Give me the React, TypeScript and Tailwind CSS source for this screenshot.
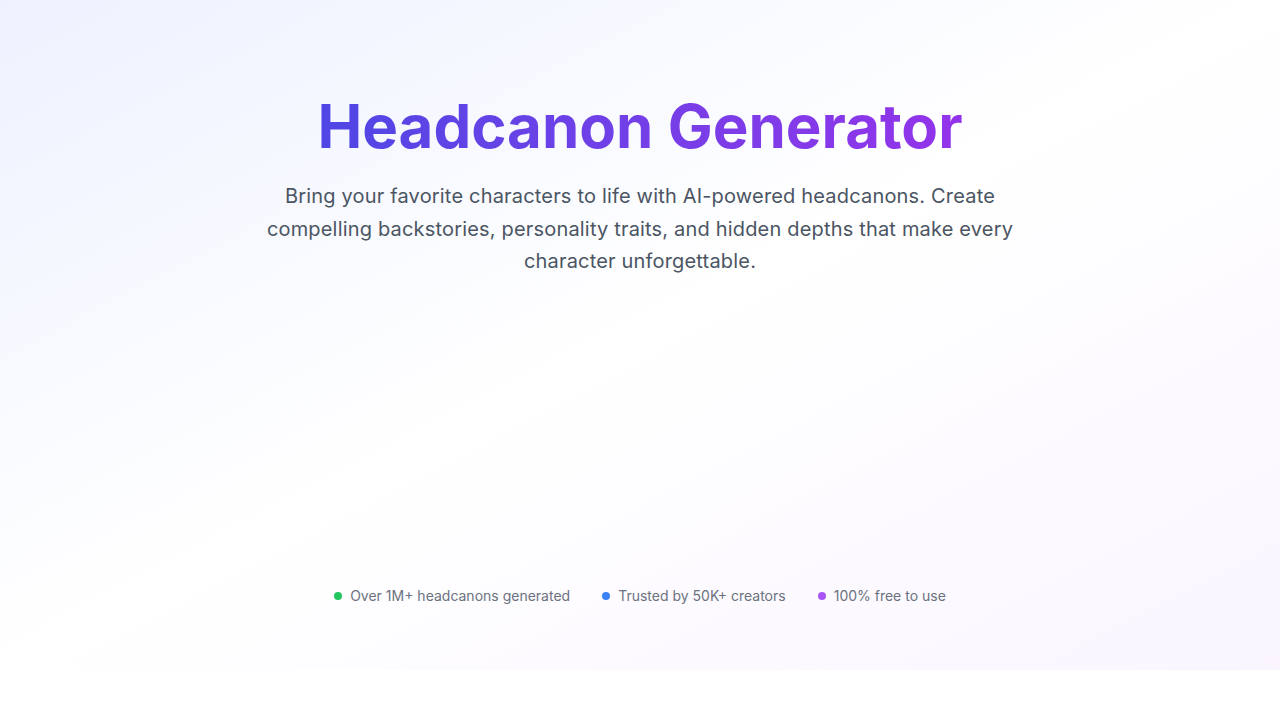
const stats = [
  { label: 'Over 1M+ headcanons generated', dot: 'bg-[#22c55e]' },
  { label: 'Trusted by 50K+ creators', dot: 'bg-[#3b82f6]' },
  { label: '100% free to use', dot: 'bg-[#a855f7]' },
]

export default function App() {
  return (
    <div className="min-h-screen bg-white" style={{ fontFamily: 'Inter, "Noto Sans", sans-serif' }}>
      <section className="h-[670px] bg-gradient-to-br from-[#eef2ff] via-white to-[#faf5ff] px-4 pt-24">
        <div className="mx-auto flex max-w-4xl flex-col items-center text-center">
          <h1 className="bg-gradient-to-r from-[#4f46e5] to-[#9333ea] bg-clip-text text-6xl leading-none font-bold text-transparent">
            Headcanon Generator
          </h1>
          <p className="mt-6 max-w-3xl text-xl leading-relaxed tracking-[0.18px] text-[#4b5563]">
            Bring your favorite characters to life with AI-powered headcanons. Create compelling backstories,
            personality traits, and hidden depths that make every character unforgettable.
          </p>
          <div className="h-[308px]" />
          <div className="flex items-center justify-center gap-8 text-sm text-[#6b7280]">
            {stats.map((s) => (
              <div key={s.label} className="flex items-center gap-2">
                <span className={`h-2 w-2 rounded-full ${s.dot}`} />
                <span>{s.label}</span>
              </div>
            ))}
          </div>
        </div>
      </section>
    </div>
  )
}
